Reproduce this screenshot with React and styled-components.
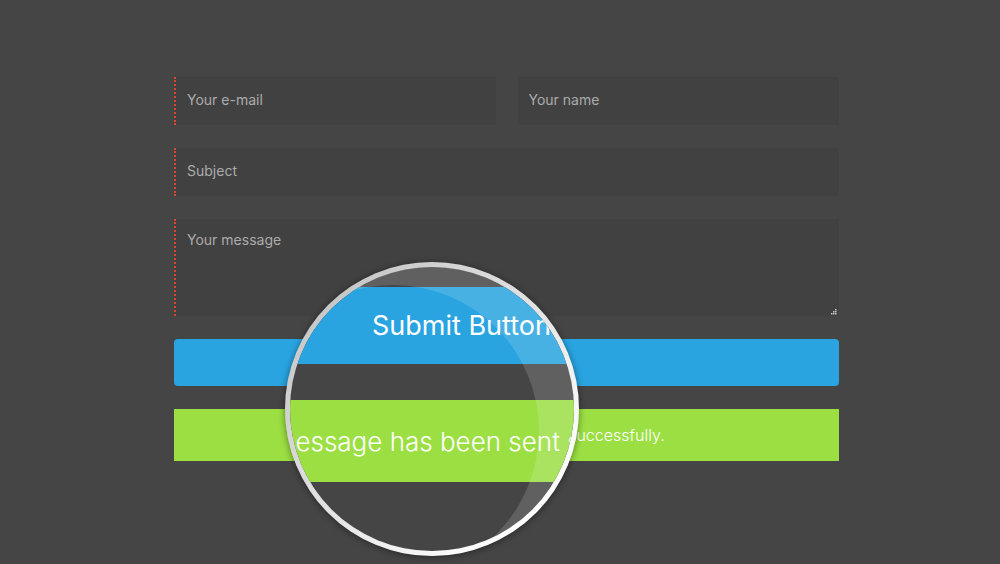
import React from "react";
import styled, { createGlobalStyle } from "styled-components";

const GlobalStyle = createGlobalStyle`
  * { box-sizing: border-box; }
  body {
    margin: 0;
    background: #454545;
    font-family: Inter, "Open Sans", sans-serif;
    overflow-x: hidden;
  }
`;

const Page = styled.main`
  min-height: 100vh;
  padding: 77px 161px 100px 174px;
`;

const Form = styled.form`
  position: relative;
  display: flex;
  flex-direction: column;
  gap: 23px;
`;

const Row = styled.div`
  display: grid;
  grid-template-columns: 1fr 1fr;
  gap: 22px;
`;

const Field = styled.input`
  width: 100%;
  height: 48px;
  padding: 0 11px 3px;
  border: 0 dotted #d9482e;
  border-left-width: ${(p) => (p.required ? "2px" : "0")};
  border-radius: 0;
  background: #414141;
  color: #ababab;
  font: 400 14px/20px Inter, "Open Sans", sans-serif;
  outline: none;
  &::placeholder { color: #ababab; opacity: 1; }
`;

const MessageBox = styled.div`
  position: relative;
  display: flex;
`;

const Message = styled(Field)`
  height: 97px;
  padding: 11px;
  resize: none;
`;

const Grip = styled.svg`
  position: absolute;
  right: 2px;
  bottom: 1px;
`;

const Submit = styled.button`
  height: 47px;
  border: 0;
  border-radius: 4px;
  background: #29a4e0;
  color: #fff;
`;

const Notice = styled.p`
  margin: 0;
  height: 52px;
  background: #9cdf43;
  color: #fff;
  font-size: 16px;
  font-weight: 300;
  line-height: 52px;
  text-align: center;
`;

const Lens = styled.div`
  position: absolute;
  left: 111px;
  top: 185px;
  width: 294px;
  height: 294px;
  padding: 5px;
  border-radius: 50%;
  background: linear-gradient(135deg, #c8c8c8 15%, #fff 85%);
  box-shadow: 0 1px 7px rgba(0, 0, 0, 0.45);
`;

const Glass = styled.div`
  position: relative;
  display: flex;
  flex-direction: column;
  gap: 36px;
  height: 100%;
  padding-top: 20px;
  border-radius: 50%;
  background: #454545;
  overflow: hidden;
`;

const Strip = styled.div`
  display: flex;
  align-items: center;
  height: ${(p) => p.$height}px;
  flex: none;
  background: ${(p) => p.$color};
  color: #fff;
  font-size: ${(p) => p.$size}px;
  font-weight: ${(p) => p.$weight};
  white-space: nowrap;
`;

const Indent = styled.span`
  margin-left: ${(p) => p.$by}px;
`;

const Shine = styled.div`
  position: absolute;
  left: -43px;
  top: 18px;
  width: 292px;
  height: 292px;
  border-radius: 50%;
  box-shadow: 0 0 0 200px rgba(255, 255, 255, 0.15);
`;

const dots = [[4, 0], [2, 2], [4, 2], [0, 4], [2, 4], [4, 4]];

export default function App() {
  return (
    <>
      <GlobalStyle />
      <Page>
        <Form onSubmit={(e) => e.preventDefault()}>
          <Row>
            <Field type="email" aria-label="Your e-mail" placeholder="Your e-mail" required />
            <Field type="text" aria-label="Your name" placeholder="Your name" />
          </Row>
          <Field type="text" aria-label="Subject" placeholder="Subject" required />
          <MessageBox>
            <Message as="textarea" aria-label="Your message" placeholder="Your message" required />
            <Grip width="6" height="6" aria-hidden="true">
              {dots.map(([x, y]) => (
                <rect key={`${x}-${y}`} x={x} y={y} width="1.5" height="1.5" fill="#c4c4c4" />
              ))}
            </Grip>
          </MessageBox>
          <Submit type="submit" aria-label="Submit Button" />
          <Notice role="status">Your message has been sent successfully.</Notice>
          <Lens aria-hidden="true">
            <Glass>
              <Strip $color="#29a4e0" $height={77} $size={27} $weight={400}>
                <Indent $by={82}>Submit Button</Indent>
              </Strip>
              <Strip $color="#9cdf43" $height={82} $size={26} $weight={300}>
                <Indent $by={-80}>Your message has been sent successfully.</Indent>
              </Strip>
              <Shine />
            </Glass>
          </Lens>
        </Form>
      </Page>
    </>
  );
}
